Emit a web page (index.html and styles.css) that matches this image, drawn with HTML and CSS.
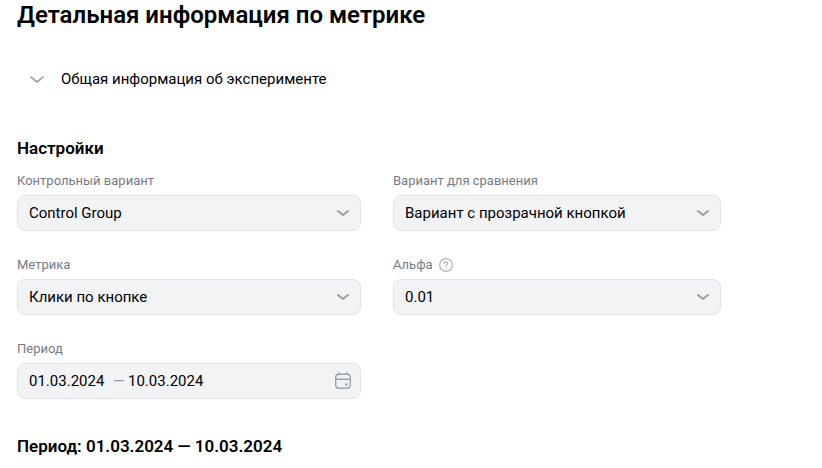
FILE: index.html
```
<!DOCTYPE html>
<html lang="ru">
<head>
<meta charset="utf-8">
<meta name="viewport" content="width=device-width, initial-scale=1">
<title>Детальная информация по метрике</title>
<link rel="stylesheet" href="styles.css">
</head>
<body>
<svg class="sprite" aria-hidden="true">
  <symbol id="chevron" viewBox="0 0 16 16">
    <path d="M3 6l5 4 5-4" fill="none" stroke="currentColor" stroke-width="2" stroke-linecap="round" stroke-linejoin="round"/>
  </symbol>
</svg>
<main class="page">
  <h1 class="title">Детальная информация по метрике</h1>

  <details class="about">
    <summary class="about-summary">
      <svg class="about-icon" viewBox="0 0 16 16" aria-hidden="true"><path d="M2 6l6 5 6-5" fill="none" stroke="currentColor" stroke-width="1.8" stroke-linecap="round" stroke-linejoin="round"/></svg>
      <span>Общая информация об эксперименте</span>
    </summary>
  </details>

  <form class="settings">
    <h2 class="heading">Настройки</h2>
    <div class="fields">
      <div class="field">
        <label class="label" for="control">Контрольный вариант</label>
        <div class="select">
          <select class="box" id="control"><option>Control Group</option></select>
          <svg class="chevron" aria-hidden="true"><use href="#chevron"/></svg>
        </div>
      </div>
      <div class="field">
        <label class="label" for="compare">Вариант для сравнения</label>
        <div class="select">
          <select class="box" id="compare"><option>Вариант с прозрачной кнопкой</option></select>
          <svg class="chevron" aria-hidden="true"><use href="#chevron"/></svg>
        </div>
      </div>
      <div class="field">
        <label class="label" for="metric">Метрика</label>
        <div class="select">
          <select class="box" id="metric"><option>Клики по кнопке</option></select>
          <svg class="chevron" aria-hidden="true"><use href="#chevron"/></svg>
        </div>
      </div>
      <div class="field">
        <label class="label" for="alpha">Альфа
          <svg class="help" viewBox="0 0 14 14" fill="none" stroke="currentColor" stroke-linecap="round" aria-hidden="true">
            <circle cx="7" cy="7" r="6.4" stroke-width="1.2"/>
            <path d="M5.2 5.6c0-1.1.8-1.8 1.8-1.8s1.8.7 1.8 1.6c0 1.2-1.7 1.3-1.7 2.6" stroke-width="1.2"/>
            <circle cx="7.1" cy="10" r=".7" fill="currentColor" stroke="none"/>
          </svg>
        </label>
        <div class="select">
          <select class="box" id="alpha"><option>0.01</option></select>
          <svg class="chevron" aria-hidden="true"><use href="#chevron"/></svg>
        </div>
      </div>
      <div class="field">
        <label class="label" for="from">Период</label>
        <div class="box range">
          <input class="date" id="from" type="text" value="01.03.2024">
          <span class="dash">—</span>
          <input class="date" type="text" value="10.03.2024">
          <button class="calendar" type="button">
            <svg viewBox="0 0 20 20" width="20" height="20" fill="none" stroke="currentColor" stroke-width="1.4" stroke-linecap="round" aria-hidden="true">
              <rect x="2.7" y="3.2" width="14.6" height="14.1" rx="3.2"/>
              <path d="M2.7 8.3h14.6M6 1.8v1.4M14 1.8v1.4"/>
              <circle cx="13.5" cy="13.5" r="1.3" fill="currentColor" stroke="none"/>
            </svg>
          </button>
        </div>
      </div>
    </div>
  </form>

  <h2 class="heading">Период: 01.03.2024 — 10.03.2024</h2>
</main>
</body>
</html>
```
FILE: styles.css
```
* {
  box-sizing: border-box;
}

body {
  margin: 0;
  background: #fff;
  color: #000;
  font: 400 15px/20px Roboto, "Noto Sans", sans-serif;
}

.sprite {
  display: none;
}

.page {
  max-width: 738px;
  padding: 0 17px 12px;
}

.title {
  margin: 0;
  font-size: 24px;
  line-height: 30px;
  font-weight: 600;
}

.about {
  margin: 39px 0 49px 12px;
}

.about-summary {
  display: flex;
  align-items: center;
  gap: 16px;
  list-style: none;
  cursor: pointer;
}

.about-icon {
  width: 16px;
  height: 16px;
  color: #a2a5a9;
}

.heading {
  margin: 0;
  font-size: 17px;
  line-height: 20px;
  font-weight: 600;
}

.settings {
  margin-bottom: 37px;
}

.fields {
  display: grid;
  grid-template-columns: minmax(0, 344fr) minmax(0, 328fr);
  gap: 26px 32px;
  margin-top: 15px;
}

.field {
  display: flex;
  flex-direction: column;
  gap: 6px;
}

.label {
  display: flex;
  align-items: center;
  gap: 6px;
  color: #767b84;
  font-size: 13px;
  line-height: 16px;
}

.help {
  width: 14px;
  height: 14px;
  color: #aeb3b9;
}

.box {
  width: 100%;
  height: 36px;
  padding: 0 11px;
  border: 1px solid #e1e3e6;
  border-radius: 8px;
  background: #f2f3f5;
  color: #000;
  font: inherit;
}

.select {
  position: relative;
}

select.box {
  display: block;
  padding-right: 36px;
  appearance: none;
}

.chevron {
  position: absolute;
  top: 10px;
  right: 10px;
  width: 16px;
  height: 16px;
  color: #9a9fa6;
  pointer-events: none;
}

.range {
  display: flex;
  align-items: center;
  padding-right: 7px;
}

.date {
  width: 80px;
  padding: 0;
  border: 0;
  background: none;
  color: inherit;
  font: inherit;
}

.dash {
  width: 19px;
  color: #9299a2;
  text-align: center;
}

.calendar {
  display: flex;
  margin-left: auto;
  padding: 0;
  border: 0;
  background: none;
  color: #99a2ad;
}
```
